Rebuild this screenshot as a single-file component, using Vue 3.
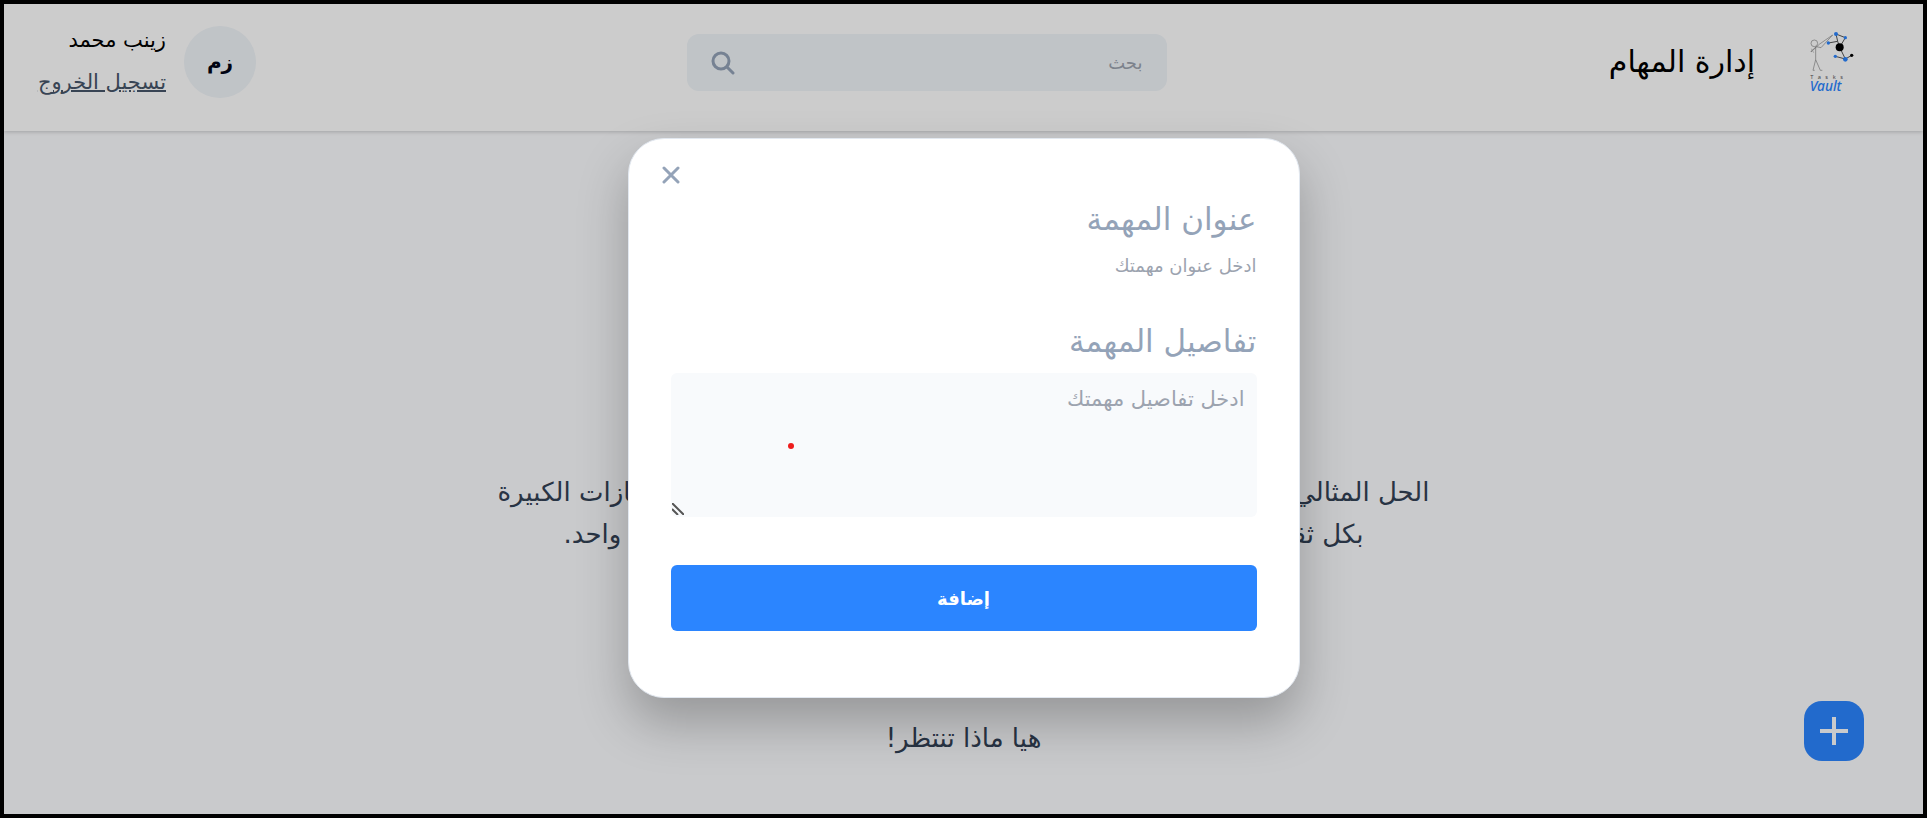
<script setup>
import { ref } from 'vue'

const search = ref('')
const title = ref('')
const details = ref('')
</script>

<template>
  <div class="screen" dir="rtl" lang="ar">
    <header class="topbar">
      <div class="brand">
        <svg class="logo" viewBox="50 28 150 192" role="img" aria-label="Tasks Vault">
          <g fill="none" stroke="#888" stroke-width="2">
            <circle cx="72" cy="68" r="10" />
            <path d="M76 78V117L68 149H73M76 117L90 149H96M62 92L78 78L92 81L127 43L88 70L62 94Z" />
            <path d="M63 84L70 96" stroke="#aaa" />
          </g>
          <g fill="none" stroke="#555" stroke-width="3">
            <path d="M114 67L142 62L137 40L165 51L148 80L165 115L184 104M165 115L135 107M142 62L148 80" />
          </g>
          <g fill="#2b85ff">
            <circle cx="137" cy="40" r="6" />
            <circle cx="165" cy="51" r="5" />
            <circle cx="114" cy="67" r="5" />
            <circle cx="135" cy="107" r="5" />
            <circle cx="165" cy="116" r="7" />
          </g>
          <circle cx="148" cy="80" r="12" />
          <circle cx="184" cy="104" r="5" />
          <g direction="ltr">
            <text x="60" y="175" class="logo-small">T</text>
            <text x="82" y="175" class="logo-small">a</text>
            <text x="105" y="175" class="logo-small">s</text>
            <text x="127" y="175" class="logo-small">k</text>
            <text x="150" y="175" class="logo-small">s</text>
            <text x="58" y="210" class="logo-big">Vault</text>
          </g>
        </svg>
        <h1>إدارة المهام</h1>
      </div>

      <label class="search">
        <input v-model="search" type="text" placeholder="بحث" aria-label="بحث" />
        <svg viewBox="0 0 24 24" aria-hidden="true">
          <circle cx="10" cy="10" r="8" />
          <path d="M16 16L22 22" />
        </svg>
      </label>

      <div class="user">
        <span class="avatar">زم</span>
        <div class="user-text">
          <span>زينب محمد</span>
          <a href="#">تسجيل الخروج</a>
        </div>
      </div>
    </header>

    <main class="page">
      <div class="intro">
        <p class="line wide"><span>الحل المثالي</span><span>الإنجازات الكبيرة</span></p>
        <p class="line narrow"><span>بكل ثقة</span><span>واحد.</span></p>
      </div>
      <p class="cta">هيا ماذا تنتظر!</p>
      <button class="fab" type="button" aria-label="إضافة مهمة">
        <svg viewBox="0 0 28 28" aria-hidden="true"><path d="M14 0V28M0 14H28" /></svg>
      </button>
    </main>

    <div class="overlay">
      <form class="modal" role="dialog" aria-modal="true" @submit.prevent>
        <button class="close" type="button" aria-label="إغلاق">
          <svg viewBox="0 0 18 18" aria-hidden="true"><path d="M2 2L16 16M16 2L2 16" /></svg>
        </button>
        <label class="heading" for="task-title">عنوان المهمة</label>
        <input id="task-title" v-model="title" class="title-input" type="text" placeholder="ادخل عنوان مهمتك" />
        <label class="heading" for="task-details">تفاصيل المهمة</label>
        <div class="details">
          <textarea id="task-details" v-model="details" placeholder="ادخل تفاصيل مهمتك"></textarea>
          <svg class="grip" viewBox="0 0 12 12" aria-hidden="true"><path d="M0 0L12 12M0 6L6 12" /></svg>
          <i class="dot"></i>
        </div>
        <button class="submit" type="submit">إضافة</button>
      </form>
    </div>
  </div>
</template>

<style>
body {
  margin: 0;
}
</style>

<style scoped>
.screen {
  position: relative;
  box-sizing: border-box;
  min-height: 100vh;
  display: flex;
  flex-direction: column;
  border: 4px solid #000;
  background: #fcfdff;
  color: #000;
  font-family: "DejaVu Sans", sans-serif;
}

.screen * {
  box-sizing: border-box;
}

h1,
p {
  margin: 0;
  font-weight: 400;
}

button,
input,
textarea {
  margin: 0;
  padding: 0;
  border: 0;
  outline: 0;
  font-family: inherit;
}

button {
  cursor: pointer;
}

.topbar {
  position: relative;
  z-index: 1;
  display: flex;
  justify-content: space-between;
  align-items: flex-start;
  height: 127px;
  padding: 22px 48px 0 32px;
  background: #fff;
  box-shadow: 0 1px 4px rgba(0, 0, 0, 0.2);
}

.brand {
  display: flex;
  align-items: center;
  gap: 52px;
  width: 278px;
  height: 72px;
  padding-right: 18px;
}

.logo {
  flex: none;
  width: 50px;
  height: 64px;
}

.logo-small {
  fill: #555;
  font: 17px "Noto Sans", sans-serif;
}

.logo-big {
  fill: #2b85ff;
  font: italic 500 41px "Noto Sans", sans-serif;
}

h1 {
  font-size: 30px;
  line-height: 36px;
  white-space: nowrap;
}

.search {
  display: flex;
  align-items: center;
  width: 480px;
  height: 57px;
  margin-top: 8px;
  padding: 0 24px;
  border-radius: 12px;
  background: #f0f5f9;
}

.search input {
  flex: 1;
  min-width: 0;
  background: none;
  font-size: 18px;
}

.search input::placeholder {
  color: #9ca3af;
  opacity: 1;
}

.search svg {
  width: 24px;
  height: 24px;
  fill: none;
  stroke: #94a3b8;
  stroke-width: 3;
  stroke-linecap: round;
}

.user {
  display: flex;
  gap: 18px;
  width: 220px;
}

.avatar {
  flex: none;
  display: grid;
  place-items: center;
  width: 72px;
  height: 72px;
  border-radius: 50%;
  background: #f0f5f9;
  color: #020617;
  font-size: 20px;
  font-weight: 700;
}

.user-text {
  display: flex;
  flex-direction: column;
  gap: 14px;
  font-size: 21px;
  line-height: 28px;
  white-space: nowrap;
}

.user-text a {
  color: #475569;
  text-decoration: underline 2px;
}

.page {
  flex: 1;
  display: flex;
  flex-direction: column;
  align-items: center;
  padding-top: 340px;
  color: #334155;
  font-size: 26px;
  line-height: 42px;
}

.intro {
  display: flex;
  flex-direction: column;
  align-items: center;
}

.line {
  display: flex;
  justify-content: space-between;
  white-space: nowrap;
}

.wide {
  width: 932px;
}

.narrow {
  width: 800px;
}

.cta {
  margin-top: 162px;
}

.fab {
  position: absolute;
  right: 59px;
  bottom: 53px;
  display: grid;
  place-items: center;
  width: 60px;
  height: 60px;
  border-radius: 18px;
  background: #2b85ff;
}

.fab svg {
  width: 28px;
  height: 28px;
  stroke: #fcfdff;
  stroke-width: 4;
}

.overlay {
  position: absolute;
  inset: 0;
  z-index: 2;
  display: flex;
  justify-content: center;
  align-items: flex-start;
  padding-top: 134px;
  background: rgba(0, 0, 0, 0.2);
}

.modal {
  display: flex;
  flex-direction: column;
  width: 672px;
  padding: 26px 42px 66px;
  border: 1px solid #e2e8f0;
  border-radius: 36px;
  background: #fff;
  box-shadow: 0 25px 50px rgba(0, 0, 0, 0.25);
}

.close {
  align-self: flex-end;
  display: grid;
  margin-left: -9px;
  background: none;
}

.close svg {
  width: 18px;
  height: 20px;
  stroke: #94a3b8;
  stroke-width: 3;
  stroke-linecap: round;
}

.heading {
  margin-top: 14px;
  color: #94a3b8;
  font-size: 31px;
  line-height: 40px;
}

.title-input {
  height: 28px;
  margin: 12px 0 28px;
  background: none;
  font-size: 18px;
}

.details {
  position: relative;
  display: flex;
  margin: 12px 0 48px;
}

textarea {
  width: 100%;
  height: 144px;
  padding: 12px;
  border-radius: 6px;
  background: #f8fafc;
  font-size: 21px;
  line-height: 28px;
  resize: none;
}

.title-input::placeholder,
textarea::placeholder {
  color: #9ca3af;
  opacity: 1;
}

.grip {
  position: absolute;
  left: 1px;
  bottom: 2px;
  width: 12px;
  height: 12px;
  stroke: #555;
  stroke-width: 2;
}

.dot {
  position: absolute;
  left: 20%;
  top: 70px;
  width: 6px;
  height: 6px;
  border-radius: 50%;
  background: #ee1c1c;
}

.submit {
  height: 66px;
  border-radius: 6px;
  background: #2b85ff;
  color: #fff;
  font-size: 18px;
  font-weight: 700;
}
</style>
